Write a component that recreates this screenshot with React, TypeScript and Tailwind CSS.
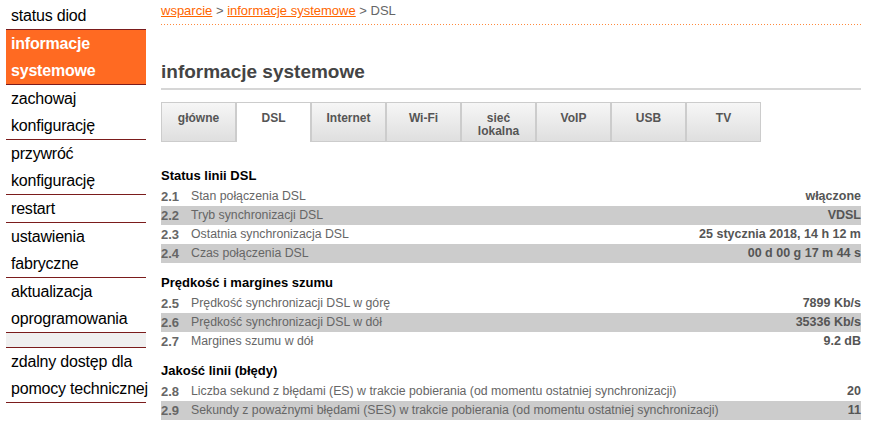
import React from 'react';

const font = { fontFamily: '"Liberation Sans", Arial, sans-serif' };

type NavItem = { lines: string[]; active?: boolean; empty?: boolean };

const navItems: NavItem[] = [
  { lines: ['status diod'] },
  { lines: ['informacje', 'systemowe'], active: true },
  { lines: ['zachowaj', 'konfigurację'] },
  { lines: ['przywróć', 'konfigurację'] },
  { lines: ['restart'] },
  { lines: ['ustawienia', 'fabryczne'] },
  { lines: ['aktualizacja', 'oprogramowania'] },
  { lines: [], empty: true },
  { lines: ['zdalny dostęp dla', 'pomocy technicznej'] },
];

const tabs = [
  { label: ['główne'] },
  { label: ['DSL'], active: true },
  { label: ['Internet'] },
  { label: ['Wi-Fi'] },
  { label: ['sieć', 'lokalna'] },
  { label: ['VoIP'] },
  { label: ['USB'] },
  { label: ['TV'] },
];

type Row = { no: string; label: string; value: string };

const groups: { title: string; rows: Row[] }[] = [
  {
    title: 'Status linii DSL',
    rows: [
      { no: '2.1', label: 'Stan połączenia DSL', value: 'włączone' },
      { no: '2.2', label: 'Tryb synchronizacji DSL', value: 'VDSL' },
      { no: '2.3', label: 'Ostatnia synchronizacja DSL', value: '25 stycznia 2018, 14 h 12 m' },
      { no: '2.4', label: 'Czas połączenia DSL', value: '00 d 00 g 17 m 44 s' },
    ],
  },
  {
    title: 'Prędkość i margines szumu',
    rows: [
      { no: '2.5', label: 'Prędkość synchronizacji DSL w górę', value: '7899 Kb/s' },
      { no: '2.6', label: 'Prędkość synchronizacji DSL w dół', value: '35336 Kb/s' },
      { no: '2.7', label: 'Margines szumu w dół', value: '9.2 dB' },
    ],
  },
  {
    title: 'Jakość linii (błędy)',
    rows: [
      {
        no: '2.8',
        label: 'Liczba sekund z błędami (ES) w trakcie pobierania (od momentu ostatniej synchronizacji)',
        value: '20',
      },
      {
        no: '2.9',
        label: 'Sekundy z poważnymi błędami (SES) w trakcie pobierania (od momentu ostatniej synchronizacji)',
        value: '11',
      },
    ],
  },
];

const SideNav = () => (
  <div className="w-[140px] shrink-0 pt-[2px]">
    {navItems.map((item, i) => (
      <div
        key={i}
        className={
          item.empty
            ? 'h-[15px] border-b border-[#7b1c1c] bg-[#f0f0f0]'
            : item.active
              ? 'border-b border-[#7b1c1c] bg-[#ff6a22] px-[5px] text-[16px] font-bold leading-[27px] text-white'
              : 'border-b border-[#7b1c1c] px-[5px] text-[16px] leading-[27px] text-black'
        }
      >
        {item.lines.map((l) => (
          <div key={l} className="whitespace-nowrap tracking-[-0.2px]">
            {l}
          </div>
        ))}
      </div>
    ))}
  </div>
);

const Tabs = () => (
  <div className="mt-[12px] flex h-[40px]">
    {tabs.map((t) => (
      <div
        key={t.label.join(' ')}
        className={
          t.active
            ? 'h-[40px] w-[75px] border border-b-0 border-[#cccccc] bg-white pt-[9px] text-center text-[12px] font-bold leading-[13px] text-[#555]'
            : 'h-[40px] w-[75px] border border-[#cccccc] bg-[linear-gradient(#f6f6f6,#dfdfdf)] pt-[9px] text-center text-[12px] font-bold leading-[13px] text-[#555]'
        }
      >
        {t.label.map((l) => (
          <div key={l}>{l}</div>
        ))}
      </div>
    ))}
  </div>
);

export default function App() {
  return (
    <div className="flex h-[444px] w-[891px] bg-white pl-[6px]" style={font}>
      <SideNav />
      <div className="ml-[15px] w-[700px]">
        <div className="pt-[3px] text-[13px] leading-[16px] text-[#666]">
          <a className="text-[#ff6600] underline">wsparcie</a>
          <span> &gt; </span>
          <a className="text-[#ff6600] underline">informacje systemowe</a>
          <span> &gt; DSL</span>
        </div>
        <div className="mt-[5px] h-px bg-[repeating-linear-gradient(to_right,#ff8a3d_0_1px,transparent_1px_3px)]" />
        <h1 className="mt-[35px] border-b-2 border-[#d6d6d6] pb-[4px] text-[19px] font-bold leading-[24px] text-[#444]">
          informacje systemowe
        </h1>
        <Tabs />
        {groups.map((g, gi) => (
          <div key={g.title} className={gi === 0 ? 'mt-[26px]' : 'mt-[12px]'}>
            <div className="mb-[3px] h-[16px] text-[13px] font-bold leading-[16px] text-black">{g.title}</div>
            {g.rows.map((r, ri) => (
              <div
                key={r.no}
                className={
                  ri % 2 === 1
                    ? 'flex h-[19px] items-center bg-[#cccccc] text-[12.3px] text-[#666]'
                    : 'flex h-[19px] items-center text-[12.3px] text-[#666]'
                }
              >
                <span className="w-[30px] text-[13px] font-bold text-[#666]">{r.no}</span>
                <span className="flex-1">{r.label}</span>
                <span className="text-[12.5px] font-bold text-[#555]">{r.value}</span>
              </div>
            ))}
          </div>
        ))}
      </div>
    </div>
  );
}
